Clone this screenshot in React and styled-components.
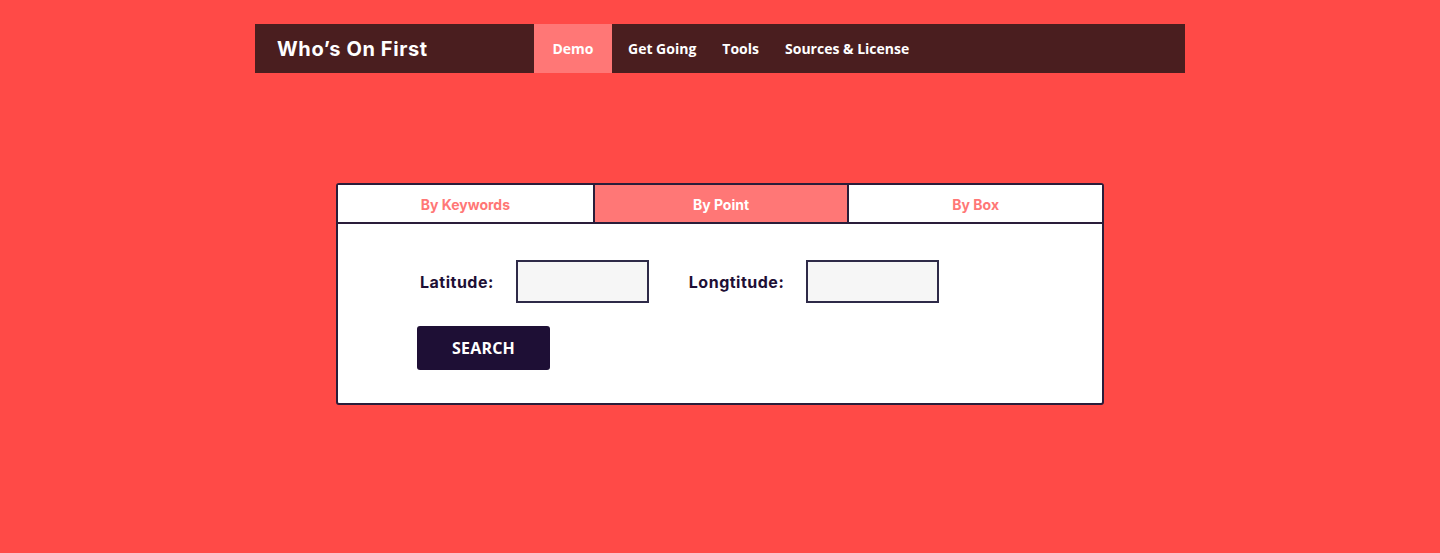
// Who's On First – demo search page
import React, { useState } from 'react'
import styled, { createGlobalStyle } from 'styled-components';

const GlobalStyle = createGlobalStyle`
    html, body {
        margin: 0;
        padding: 0;
        background: #ff4a47;
    }
    * { box-sizing: border-box; }
`

const NAV = ['Demo', 'Get Going', 'Tools', 'Sources & License']
const TABS = ['By Keywords', 'By Point', 'By Box']

function App() {
    const [tab, setTab] = useState(1)

    return (
        <Page>
            <GlobalStyle />
            <Header>
                <Brand>Who’s On First</Brand>
                <Nav>
                    {NAV.map((item, i) => (
                        <NavItem key={item} active={i === 0}>{item}</NavItem>
                    ))}
                </Nav>
            </Header>

            <Panel>
                <Tabs>
                    {TABS.map((t, i) => (
                        <Tab key={t} active={i === tab} onClick={() => setTab(i)}>{t}</Tab>
                    ))}
                </Tabs>
                <Body>
                    <Row>
                        <Label>Latitude:</Label>
                        <Input type='text' />
                        <Label spaced>Longtitude:</Label>
                        <Input type='text' />
                    </Row>
                    <Button>SEARCH</Button>
                </Body>
            </Panel>
        </Page>
    )
}

export default App

const Page = styled.div`
    min-height: 553px;
    padding-top: 24px;
    display: flex;
    flex-direction: column;
    align-items: center;
`

const Header = styled.header`
    width: 930px;
    height: 49px;
    background: #4a1e1f;
    display: flex;
    align-items: stretch;
`

const Brand = styled.div`
    width: 279px;
    padding-left: 22px;
    display: flex;
    align-items: center;
    color: #fff;
    font-family: Inter, "Liberation Sans", sans-serif;
    font-weight: 700;
    font-size: 20px;
    letter-spacing: 0.6px;
`

const Nav = styled.nav`
    display: flex;
    align-items: stretch;
`

const NavItem = styled.a`
    display: flex;
    align-items: center;
    justify-content: center;
    padding: 0 13px;
    width: ${p => p.active ? '78px' : 'auto'};
    margin-right: ${p => p.active ? '3px' : '0'};
    background: ${p => p.active ? '#ff7776' : 'transparent'};
    color: #fff;
    font-family: "Open Sans", "Liberation Sans", sans-serif;
    font-weight: 700;
    font-size: 14px;
    cursor: pointer;
`

const Panel = styled.section`
    margin-top: 110px;
    width: 768px;
    background: #fff;
    border: 2px solid #2a1d3a;
    border-radius: 3px;
`

const Tabs = styled.div`
    display: grid;
    grid-template-columns: 1fr 1fr 1fr;
    border-bottom: 2px solid #2a1d3a;
`

const Tab = styled.button`
    height: 37px;
    border: none;
    border-left: 2px solid #2a1d3a;
    &:first-child { border-left: none; }
    background: ${p => p.active ? '#ff7776' : '#fff'};
    color: ${p => p.active ? '#fff' : '#ff7776'};
    font-family: Inter, "Liberation Sans", sans-serif;
    font-weight: 700;
    font-size: 14px;
    padding-top: 2px;
    cursor: pointer;
`

const Body = styled.div`
    padding: 36px 0 33px 79px;
    display: flex;
    flex-direction: column;
    gap: 23px;
`

const Row = styled.div`
    display: flex;
    align-items: center;
`

const Label = styled.label`
    margin-left: ${p => p.spaced ? '40px' : '3px'};
    margin-right: 22px;
    color: #1e0f35;
    font-family: Inter, "Liberation Sans", sans-serif;
    font-weight: 700;
    font-size: 16px;
    letter-spacing: 0.5px;
`

const Input = styled.input`
    width: 133px;
    height: 43px;
    background: #f6f6f6;
    border: 2px solid #2e2a48;
    outline: none;
`

const Button = styled.button`
    width: 133px;
    height: 44px;
    border: none;
    border-radius: 3px;
    background: #1e0f35;
    color: #fff;
    font-family: "Open Sans", "Liberation Sans", sans-serif;
    font-weight: 700;
    font-size: 16px;
    letter-spacing: 0.2px;
    cursor: pointer;
`
